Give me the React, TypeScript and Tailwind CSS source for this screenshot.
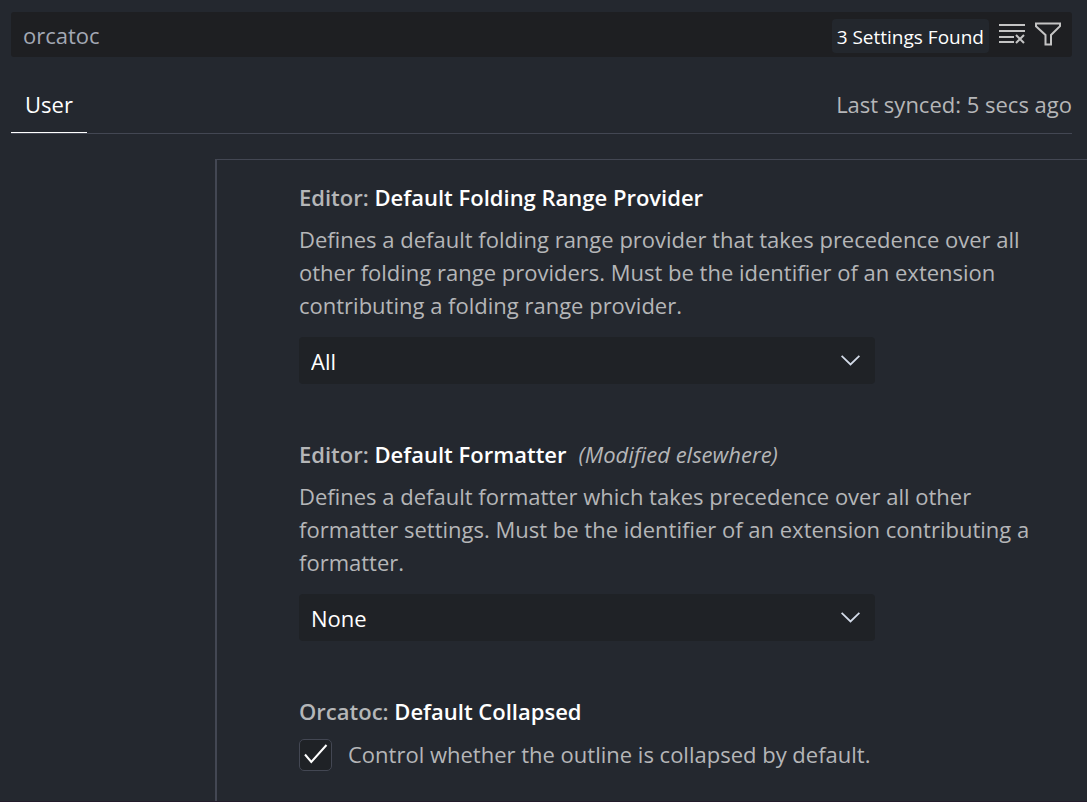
import { useState, type ReactNode } from "react";

function ClearListIcon() {
  return (
    <svg width="26" height="20" viewBox="0 0 26 20" fill="none" stroke="currentColor" strokeWidth="2" aria-hidden="true">
      <path d="M0 1H26M0 7H26M0 13H15M0 18H15" />
      <path d="M17 11L25 19M25 11L17 19" />
    </svg>
  );
}

function FilterIcon() {
  return (
    <svg width="26" height="24" viewBox="0 0 26 24" fill="none" stroke="currentColor" strokeWidth="2" aria-hidden="true">
      <path d="M1 1.5H25V4.2L16 13V22.5H10.5V13L1 4.2Z" />
    </svg>
  );
}

function Chevron() {
  return (
    <svg className="pointer-events-none absolute top-[18px] right-[15px]" width="19" height="11" viewBox="0 0 19 11" fill="none" stroke="#d3dbe8" strokeWidth="1.8" aria-hidden="true">
      <path d="M0.6 0.8L9.5 9.5L18.4 0.8" />
    </svg>
  );
}

function Heading({ group, name, note }: { group: string; name: string; note?: string }) {
  return (
    <h2 className="font-semibold">
      {group}: <span className="text-white">{name}</span>
      {note && <em className="ml-3 font-normal">({note})</em>}
    </h2>
  );
}

function SelectSetting({ id, group, name, note, value, children }: {
  id: string;
  group: string;
  name: string;
  note?: string;
  value: string;
  children: ReactNode;
}) {
  return (
    <section className="mb-[54px]">
      <Heading group={group} name={name} note={note} />
      <label htmlFor={id} className="mt-[9px] mb-[15px] block">{children}</label>
      <div className="relative max-w-[576px]">
        <select id={id} className="block h-[47px] w-full appearance-none rounded-[4px] bg-[#1f2226] px-3 pt-[2px] text-white outline-none">
          <option>{value}</option>
        </select>
        <Chevron />
      </div>
    </section>
  );
}

export default function App() {
  const [query, setQuery] = useState("orcatoc");
  const [collapsed, setCollapsed] = useState(true);

  return (
    <div className="flex min-h-screen flex-col border-b border-[#231b2b] bg-[#24282f] pt-3 font-['Open_Sans',sans-serif] text-[22px] leading-[33px] text-[#b5b6b8]">
      <header className="mr-[15px] ml-[11px]">
        <div className="flex h-[45px] items-center rounded-[3px] bg-[#1e1f22] pr-[11px]">
          <input
            aria-label="Search settings"
            className="min-w-0 flex-1 bg-transparent px-3 pt-[2px] text-[#a3a8b4] outline-none"
            value={query}
            onChange={(e) => setQuery(e.target.value)}
          />
          <span className="mt-[3px] mr-[10px] rounded-[4px] bg-[#23272d] px-[5px] pt-[2px] text-[19px] leading-8 whitespace-nowrap text-white">3 Settings Found</span>
          <button type="button" aria-label="Clear search results" className="mr-[10px] pb-[2px] text-[#c4c4c4]"><ClearListIcon /></button>
          <button type="button" aria-label="Filter settings" className="pb-[2px] text-[#c4c4c4]"><FilterIcon /></button>
        </div>
        <div className="mt-[31px] flex justify-between border-b border-[#434753]">
          <button type="button" className="border-b border-white px-[14px] pb-[11px] text-white">User</button>
          <span>Last synced: 5 secs ago</span>
        </div>
      </header>
      <main className="mt-[25px] ml-[215px] flex-1 border-t border-l-2 border-[#434753] pt-[21px] pr-[44px] pl-[82px]">
        <SelectSetting id="folding" group="Editor" name="Default Folding Range Provider" value="All">
          Defines a default folding range provider that takes precedence over all other folding range providers. Must be the identifier of an extension contributing a folding range provider.
        </SelectSetting>
        <SelectSetting id="formatter" group="Editor" name="Default Formatter" note="Modified elsewhere" value="None">
          Defines a default formatter which takes precedence over all other formatter settings. Must be the identifier of an extension contributing a formatter.
        </SelectSetting>
        <section>
          <Heading group="Orcatoc" name="Default Collapsed" />
          <label className="mt-[10px] flex items-center gap-4">
            <span className="relative">
              <input
                type="checkbox"
                checked={collapsed}
                onChange={(e) => setCollapsed(e.target.checked)}
                className="peer block h-8 w-[33px] appearance-none rounded-[5px] border border-[#434753] bg-[#1f2226]"
              />
              <svg className="pointer-events-none absolute top-[5px] left-[5px] hidden peer-checked:block" width="24" height="20" viewBox="0 0 24 20" fill="none" stroke="#fff" strokeWidth="2" aria-hidden="true">
                <path d="M1 10.5L7.3 18L22.5 1" />
              </svg>
            </span>
            Control whether the outline is collapsed by default.
          </label>
        </section>
      </main>
    </div>
  );
}
